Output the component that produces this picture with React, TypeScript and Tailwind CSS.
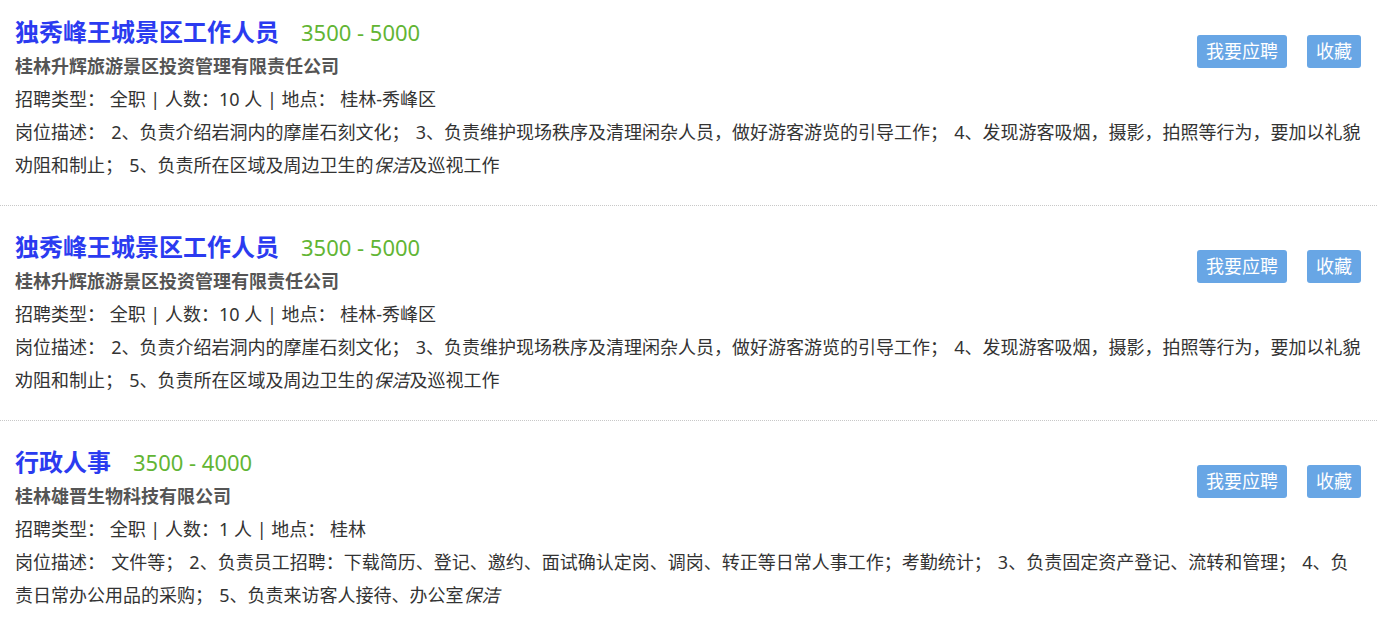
type Job = {
  id: number;
  title: string;
  salary: string;
  company: string;
  count: string;
  place: string;
  desc: string;
  tail: string;
};

const jobs: Job[] = [
  {
    id: 1,
    title: "独秀峰王城景区工作人员",
    salary: "3500 - 5000",
    company: "桂林升辉旅游景区投资管理有限责任公司",
    count: "10",
    place: "桂林-秀峰区",
    desc: "2、负责介绍岩洞内的摩崖石刻文化； 3、负责维护现场秩序及清理闲杂人员，做好游客游览的引导工作； 4、发现游客吸烟，摄影，拍照等行为，要加以礼貌劝阻和制止； 5、负责所在区域及周边卫生的",
    tail: "及巡视工作",
  },
  {
    id: 2,
    title: "独秀峰王城景区工作人员",
    salary: "3500 - 5000",
    company: "桂林升辉旅游景区投资管理有限责任公司",
    count: "10",
    place: "桂林-秀峰区",
    desc: "2、负责介绍岩洞内的摩崖石刻文化； 3、负责维护现场秩序及清理闲杂人员，做好游客游览的引导工作； 4、发现游客吸烟，摄影，拍照等行为，要加以礼貌劝阻和制止； 5、负责所在区域及周边卫生的",
    tail: "及巡视工作",
  },
  {
    id: 3,
    title: "行政人事",
    salary: "3500 - 4000",
    company: "桂林雄晋生物科技有限公司",
    count: "1",
    place: "桂林",
    desc: "文件等； 2、负责员工招聘：下载简历、登记、邀约、面试确认定岗、调岗、转正等日常人事工作；考勤统计； 3、负责固定资产登记、流转和管理； 4、负责日常办公用品的采购； 5、负责来访客人接待、办公室",
    tail: "",
  },
];

function JobItem({ job }: { job: Job }) {
  return (
    <div className="mb-[9px] border-b border-dotted border-[#c8c8c8] pl-[15px] pr-[16px] pt-[14px] pb-[23px]">
      <div className="float-right mt-[21px] flex gap-[20px]">
        <button className="h-[33px] rounded-[3px] bg-[#68a6e5] px-[9px] text-[18px] leading-[33px] text-white">
          我要应聘
        </button>
        <button className="h-[33px] rounded-[3px] bg-[#68a6e5] px-[9px] text-[18px] leading-[33px] text-white">
          收藏
        </button>
      </div>
      <div className="flex h-[36px] items-center">
        <span className="text-[24px] font-bold text-[#2b3bf0]">{job.title}</span>
        <span className="ml-[22px] text-[22px] text-[#62b534]">{job.salary}</span>
      </div>
      <p className="text-[18px] font-bold leading-[33px] text-[#555]">{job.company}</p>
      <p className="text-[18px] leading-[33px] text-[#333]">
        招聘类型： 全职 | 人数：{job.count} 人 | 地点： {job.place}
      </p>
      <p className="text-[18px] leading-[33px] text-[#333] [word-spacing:1.5px]">
        岗位描述： {job.desc}
        <em>保洁</em>
        {job.tail}
      </p>
    </div>
  );
}

export default function App() {
  return (
    <div className="min-h-[621px] bg-white font-['Noto_Sans','Noto_Sans_CJK_SC',sans-serif]">
      <div className="w-[1377px]">
        {jobs.map((job) => (
          <JobItem key={job.id} job={job} />
        ))}
      </div>
    </div>
  );
}
